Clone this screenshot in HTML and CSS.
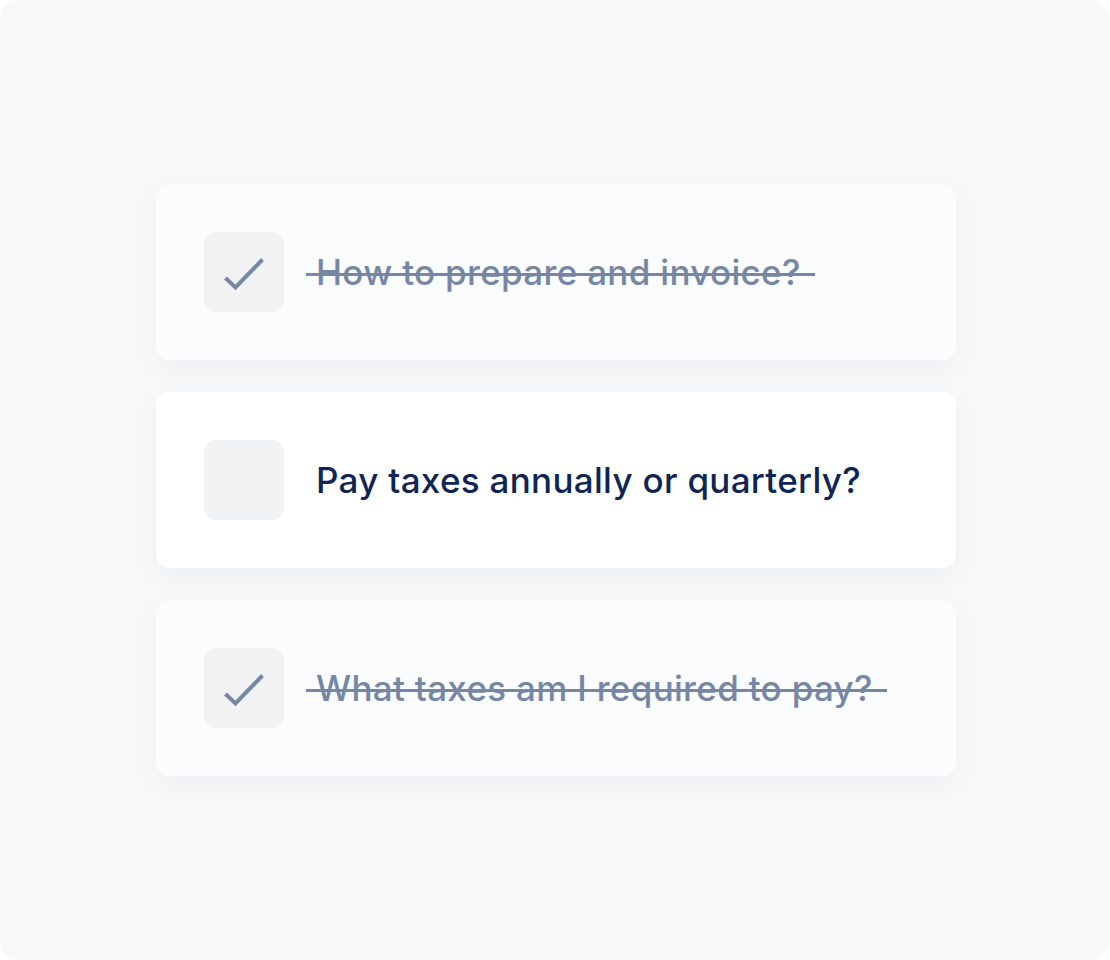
FILE: index.html
```html
<!DOCTYPE html>
<html lang="en">
<head>
    <meta charset="UTF-8">
    <title>Tasks</title>
    <link rel="stylesheet" href="styles.css">
</head>
<body>

<div class="frame">
    <div class="task-list">
        <div class="task done">
            <div class="check">
                <svg width="40" height="40" viewBox="0 0 40 40"><path d="M1.5 26 L11.5 35.5 L38.5 7.5" fill="none" stroke="#7687a5" stroke-width="4"/></svg>
            </div>
            <span class="label">How to prepare and invoice?</span>
        </div>
        <div class="task">
            <div class="check"></div>
            <span class="label">Pay taxes annually or quarterly?</span>
        </div>
        <div class="task done">
            <div class="check">
                <svg width="40" height="40" viewBox="0 0 40 40"><path d="M1.5 26 L11.5 35.5 L38.5 7.5" fill="none" stroke="#7687a5" stroke-width="4"/></svg>
            </div>
            <span class="label">What taxes am I required to pay?</span>
        </div>
    </div>
</div>

</body>
</html>
```

FILE: styles.css
```css
body {
    margin: 0;
    padding: 0;
    background-color: #ffffff;
    font-family: Inter, "Noto Sans", sans-serif;
}

.frame {
    width: 1110px;
    height: 960px;
    box-sizing: border-box;
    padding: 184px 0 0 156px;
    background-color: #f7f8fa;
    border-radius: 18px;
}

.task-list {
    width: 800px;
    display: flex;
    flex-direction: column;
    gap: 32px;
}

.task {
    height: 176px;
    box-sizing: border-box;
    padding: 0 48px;
    display: flex;
    align-items: center;
    gap: 32px;
    background-color: #ffffff;
    border-radius: 14px;
    box-shadow: 0 8px 30px rgba(20, 30, 60, 0.04);
}

.task.done {
    background-color: #fbfcfd;
}

.check {
    width: 80px;
    height: 80px;
    flex-shrink: 0;
    border-radius: 12px;
    background-color: #f1f2f4;
    display: flex;
    align-items: center;
    justify-content: center;
}

.check svg {
    display: block;
}

.label {
    font-size: 35px;
    font-weight: 500;
    color: #0f2553;
    letter-spacing: 0.3px;
}

.done .label {
    position: relative;
    color: #7687a5;
}

.done .label::after {
    content: "";
    position: absolute;
    left: -10px;
    right: -14px;
    top: 52%;
    height: 3px;
    background-color: #7687a5;
}
```
